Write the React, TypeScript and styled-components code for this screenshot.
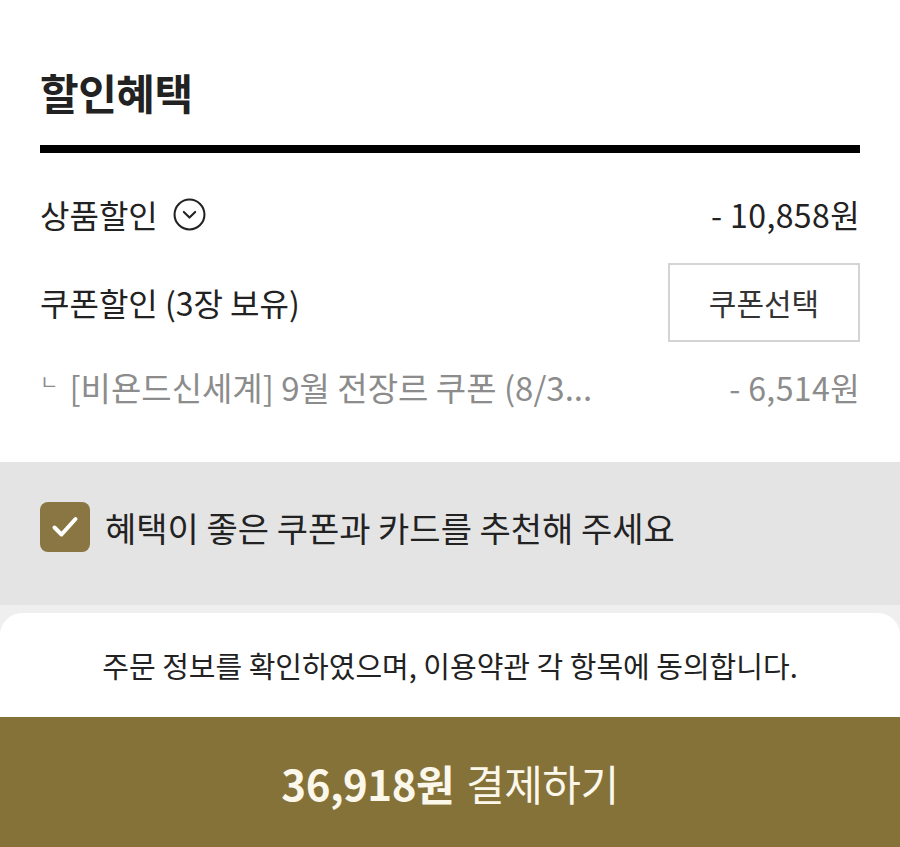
import * as React from "react";
import styled, { createGlobalStyle } from "styled-components";

const GlobalStyle = createGlobalStyle`
  html, body {
    margin: 0;
    padding: 0;
    background: #fff;
    font-family: "Noto Sans CJK KR", "Noto Sans", sans-serif;
    color: #222;
  }
`;

const CircleChevron: React.FC = () => (
  <svg width="33" height="33" viewBox="0 0 32 32" fill="none">
    <circle cx="16" cy="16" r="14.5" stroke="#222" strokeWidth="2" />
    <path
      d="M10.5 13.5 L16 19 L21.5 13.5"
      stroke="#222"
      strokeWidth="2"
      strokeLinecap="round"
      strokeLinejoin="round"
    />
  </svg>
);

const CheckMark: React.FC = () => (
  <svg width="30" height="30" viewBox="0 0 30 30" fill="none">
    <path
      d="M4.5 15.5 L11.5 22.5 L25.5 7"
      stroke="#fff"
      strokeWidth="4"
      strokeLinecap="round"
      strokeLinejoin="round"
    />
  </svg>
);

export default function App() {
  return (
    <Page>
      <GlobalStyle />
      <Section>
        <Title>할인혜택</Title>
        <Divider />
        <List>
          <Row>
            <Label>
              상품할인
              <CircleChevron />
            </Label>
            <Amount>- 10,858원</Amount>
          </Row>
          <Row>
            <Label>쿠폰할인 (3장 보유)</Label>
            <OutlineButton>쿠폰선택</OutlineButton>
          </Row>
          <SubRow>
            <SubLabel>
              <Corner>ㄴ</Corner>[비욘드신세계] 9월 전장르 쿠폰 (8/3...
            </SubLabel>
            <Amount muted>- 6,514원</Amount>
          </SubRow>
        </List>
      </Section>

      <GraySection>
        <CheckRow>
          <CheckBox>
            <CheckMark />
          </CheckBox>
          <CheckText>혜택이 좋은 쿠폰과 카드를 추천해 주세요</CheckText>
        </CheckRow>
      </GraySection>

      <Footer>
        <AgreeCard>주문 정보를 확인하였으며, 이용약관 각 항목에 동의합니다.</AgreeCard>
        <PayButton>
          <strong>36,918원</strong> 결제하기
        </PayButton>
      </Footer>
    </Page>
  );
}

const Page = styled.div`
  width: 900px;
  min-height: 847px;
  display: flex;
  flex-direction: column;
`;

const Section = styled.section`
  padding: 64px 40px 34px;
`;

const Title = styled.h2`
  margin: 0;
  font-size: 42px;
  line-height: 56px;
  font-weight: 700;
  color: #222;
  letter-spacing: -0.5px;
`;

const Divider = styled.div`
  margin-top: 25px;
  height: 8px;
  background: #000;
`;

const List = styled.div`
  padding-top: 17px;
  display: flex;
  flex-direction: column;
`;

const Row = styled.div`
  height: 88px;
  display: flex;
  align-items: center;
  justify-content: space-between;
`;

const SubRow = styled(Row)`
  height: 82px;
`;

const Label = styled.div`
  display: flex;
  align-items: center;
  gap: 15px;
  font-size: 32px;
  color: #222;
`;

const SubLabel = styled.div`
  font-size: 33px;
  color: #8c8c8c;
`;

const Corner = styled.span`
  font-size: 20px;
  vertical-align: 11px;
  margin-right: 11px;
`;

const Amount = styled.div<{ muted?: boolean }>`
  font-size: 32px;
  color: ${(p) => (p.muted ? "#8c8c8c" : "#222")};
  letter-spacing: 0.4px;
`;

const OutlineButton = styled.button`
  width: 192px;
  height: 79px;
  border: 2px solid #d4d4d4;
  background: #fff;
  font-family: inherit;
  font-size: 30px;
  color: #333;
  padding: 0;
  cursor: pointer;
`;

const GraySection = styled.section`
  background: #e4e4e4;
  height: 143px;
  padding: 40px 40px 0;
  box-sizing: border-box;
`;

const CheckRow = styled.label`
  display: flex;
  align-items: center;
  gap: 15px;
  height: 50px;
`;

const CheckBox = styled.span`
  width: 50px;
  height: 50px;
  border-radius: 8px;
  background: #8a7642;
  display: flex;
  align-items: center;
  justify-content: center;
`;

const CheckText = styled.span`
  font-size: 34px;
  color: #222;
`;

const Footer = styled.footer`
  background: #efefef;
  padding-top: 8px;
  display: flex;
  flex-direction: column;
`;

const AgreeCard = styled.div`
  height: 104px;
  background: #fff;
  border-radius: 22px 22px 0 0;
  display: flex;
  align-items: center;
  justify-content: center;
  font-size: 29px;
  color: #222;
`;

const PayButton = styled.button`
  height: 130px;
  border: none;
  background: #857239;
  color: #fbf7ea;
  font-family: inherit;
  font-size: 42px;
  display: flex;
  align-items: center;
  justify-content: center;
  gap: 12px;
  padding: 0;
  letter-spacing: -0.5px;

  strong {
    font-weight: 700;
  }
`;
